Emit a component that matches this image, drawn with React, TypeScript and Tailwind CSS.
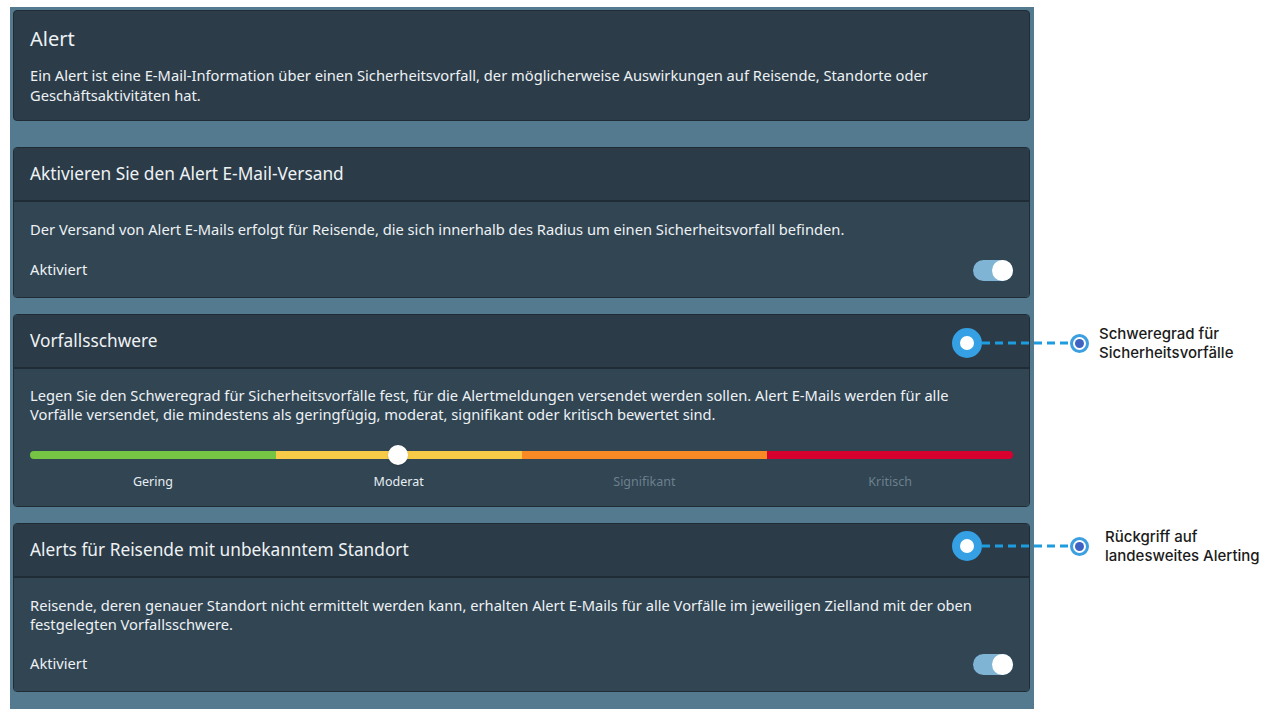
import React from "react";

const font = "font-['Noto_Sans',sans-serif]";

const Toggle: React.FC = () => (
  <div className="relative h-[21px] w-[40px] rounded-full bg-[#7fb4d4]">
    <div className="absolute right-0 top-0 h-[21px] w-[21px] rounded-full bg-white" />
  </div>
);

const CardHeader: React.FC<{ title: string }> = ({ title }) => (
  <div className="flex h-[54px] items-center border-b-2 border-[#1f2c35] bg-[#2b3b47] px-[16px]">
    <h3 className="text-[17.3px] text-[#eef2f5]">{title}</h3>
  </div>
);

const segments = [
  { label: "Gering", color: "bg-[#76c443]", text: "text-[#e8eef2]" },
  { label: "Moderat", color: "bg-[#f7cb48]", text: "text-[#e8eef2]" },
  { label: "Signifikant", color: "bg-[#f88a25]", text: "text-[#6c808d]" },
  { label: "Kritisch", color: "bg-[#d8002f]", text: "text-[#6c808d]" },
];

const Callout: React.FC<{ top: number; textLeft: string; lines: string[] }> = ({
  top,
  textLeft,
  lines,
}) => (
  <div className="absolute left-0 flex items-center" style={{ top }}>
    <div className="ml-[952px] flex h-[30px] w-[30px] items-center justify-center rounded-full bg-[#35a0e3]">
      <div className="h-[14px] w-[14px] rounded-full bg-white" />
    </div>
    <svg width="88" height="4" className="block">
      <line x1="0" y1="2" x2="88" y2="2" stroke="#1d9ddf" strokeWidth="3" strokeDasharray="8 5" />
    </svg>
    <div className="flex h-[19px] w-[19px] items-center justify-center rounded-full border-[3px] border-[#3c9fe0] bg-white">
      <div className="h-[9px] w-[9px] rounded-full bg-[#3f63c2]" />
    </div>
    <div
      className={`${textLeft} font-['Inter',sans-serif] text-[15px] font-medium leading-[19px] text-[#1b1b1b]`}
    >
      {lines.map((l) => (
        <div key={l}>{l}</div>
      ))}
    </div>
  </div>
);

export default function App() {
  return (
    <div className={`relative h-[709px] w-[1275px] overflow-hidden bg-white ${font}`}>
      <div className="ml-[10px] mt-[7px] h-[702px] w-[1024px] bg-[#537a8e] pl-[3px] pr-[4px] pt-[3px]">
        {/* Alert intro */}
        <div className="rounded-[4px] border border-[#1f2c35] bg-[#2c3d49] px-[16px] pb-[15px] pt-[14px]">
          <h2 className="text-[20px] leading-[28px] text-[#eef2f5]">Alert</h2>
          <p className="mt-[12px] pr-[24px] text-[14.7px] leading-[20px] text-[#eef2f5]">
            Ein Alert ist eine E-Mail-Information über einen Sicherheitsvorfall, der möglicherweise
            Auswirkungen auf Reisende, Standorte oder Geschäftsaktivitäten hat.
          </p>
        </div>

        {/* E-Mail-Versand */}
        <div className="mt-[26px] overflow-hidden rounded-[4px] border border-[#1f2c35]">
          <CardHeader title="Aktivieren Sie den Alert E-Mail-Versand" />
          <div className="bg-[#314553] px-[16px] pb-[16px] pt-[17px] text-[14.7px] leading-[20px] text-[#eef2f5]">
            <p className="pr-[24px]">
              Der Versand von Alert E-Mails erfolgt für Reisende, die sich innerhalb des Radius um
              einen Sicherheitsvorfall befinden.
            </p>
            <div className="mt-[21px] flex h-[21px] items-center justify-between">
              <span className="-mt-[3px]">Aktiviert</span>
              <Toggle />
            </div>
          </div>
        </div>

        {/* Vorfallsschwere */}
        <div className="mt-[16px] overflow-hidden rounded-[4px] border border-[#1f2c35]">
          <CardHeader title="Vorfallsschwere" />
          <div className="bg-[#314553] px-[16px] pb-[14px] pt-[17px] text-[14.7px] leading-[19px] text-[#eef2f5]">
            <p className="pr-[24px]">
              Legen Sie den Schweregrad für Sicherheitsvorfälle fest, für die Alertmeldungen
              versendet werden sollen. Alert E-Mails werden für alle Vorfälle versendet, die
              mindestens als geringfügig, moderat, signifikant oder kritisch bewertet sind.
            </p>
            <div className="relative mt-[21px] flex h-[20px] items-center">
              {segments.map((s, i) => (
                <div
                  key={s.label}
                  className={`h-[8px] flex-1 ${s.color} ${i === 0 ? "rounded-l-full" : ""} ${
                    i === 3 ? "rounded-r-full" : ""
                  }`}
                />
              ))}
              <div className="absolute left-[358px] top-0 h-[20px] w-[20px] rounded-full bg-white shadow" />
            </div>
            <div className="mt-[7px] flex text-[12.5px] leading-[20px]">
              {segments.map((s) => (
                <div key={s.label} className={`flex-1 text-center ${s.text}`}>
                  {s.label}
                </div>
              ))}
            </div>
          </div>
        </div>

        {/* Unbekannter Standort */}
        <div className="mt-[16px] overflow-hidden rounded-[4px] border border-[#1f2c35]">
          <CardHeader title="Alerts für Reisende mit unbekanntem Standort" />
          <div className="bg-[#314553] px-[16px] pb-[16px] pt-[18px] text-[14.7px] leading-[19px] text-[#eef2f5]">
            <p className="pr-[24px]">
              Reisende, deren genauer Standort nicht ermittelt werden kann, erhalten Alert E-Mails
              für alle Vorfälle im jeweiligen Zielland mit der oben festgelegten Vorfallsschwere.
            </p>
            <div className="mt-[20px] flex h-[21px] items-center justify-between">
              <span className="-mt-[2px]">Aktiviert</span>
              <Toggle />
            </div>
          </div>
        </div>
      </div>

      <Callout top={324} textLeft="ml-[10px]" lines={["Schweregrad für", "Sicherheitsvorfälle"]} />
      <Callout top={527} textLeft="ml-[16px]" lines={["Rückgriff auf", "landesweites Alerting"]} />
    </div>
  );
}
